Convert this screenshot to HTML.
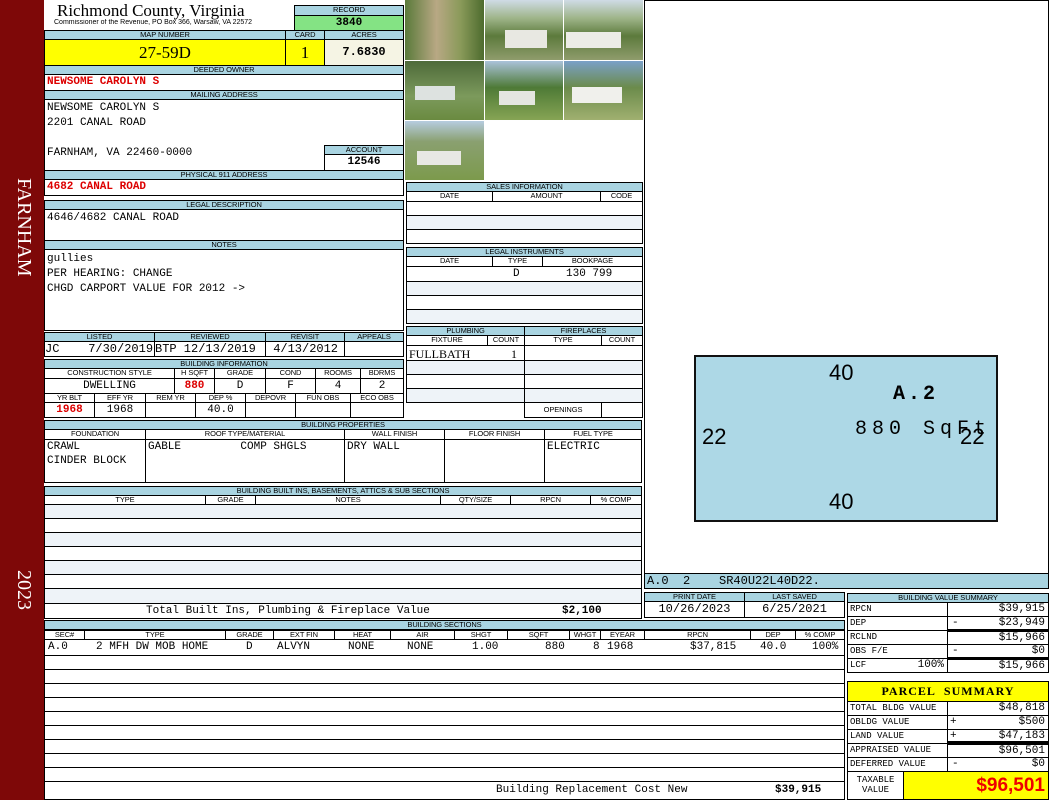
<!DOCTYPE html>
<html><head><meta charset="utf-8"><style>
body{margin:0;width:1050px;height:800px;position:relative;background:#fff;overflow:hidden;font-family:"Liberation Sans",sans-serif}
.a{position:absolute;box-sizing:border-box;overflow:hidden;white-space:nowrap}
.h{background:#a9d4e1;border:1px solid #000;font-size:7.5px;text-align:center;line-height:8px;letter-spacing:-0.1px}
.v{border:1px solid #000;font-family:"Liberation Mono",monospace;font-size:11px;background:#fff}
.s{background:#eef3f8}
.r{color:#d00;font-weight:bold}
.c{text-align:center}
.rt{text-align:right;padding-right:3px}
.p{padding-left:2px}
.ph{background:linear-gradient(#cfdbe6 0%,#9fb58a 30%,#5c7a3c 60%,#8f9c6c 100%)}
</style></head><body>
<div class="a" style="left:0;top:0;width:44px;height:800px;background:#7e0808"></div>
<div class="a" style="left:12px;top:178px;width:24px;height:130px;writing-mode:vertical-rl;color:#fff;font:20px 'Liberation Serif',serif;line-height:24px">FARNHAM</div>
<div class="a" style="left:12px;top:570px;width:24px;height:60px;writing-mode:vertical-rl;color:#fff;font:20px 'Liberation Serif',serif;line-height:24px">2023</div>

<div class="a" style="left:57px;top:1px;font:17px 'Liberation Serif',serif">Richmond County, Virginia</div>
<div class="a" style="left:54px;top:19px;font-size:7px">Commissioner of the Revenue, PO Box 366, Warsaw, VA 22572</div>
<div class="a h" style="left:294px;top:5px;width:110px;height:11px">RECORD</div>
<div class="a v c" style="left:294px;top:15px;width:110px;height:16px;background:#84e384;font-weight:bold;line-height:14px">3840</div>

<div class="a h" style="left:44px;top:30px;width:242px;height:10px">MAP NUMBER</div>
<div class="a h" style="left:285px;top:30px;width:40px;height:10px">CARD</div>
<div class="a h" style="left:324px;top:30px;width:80px;height:10px">ACRES</div>
<div class="a v c" style="left:44px;top:39px;width:242px;height:27px;background:#ffff00;font:17px 'Liberation Serif',serif;line-height:25px">27-59D</div>
<div class="a v c" style="left:285px;top:39px;width:40px;height:27px;background:#ffff00;font:17px 'Liberation Serif',serif;line-height:25px">1</div>
<div class="a v c" style="left:324px;top:39px;width:80px;height:27px;background:#f5f4e4;font-weight:bold;font-size:12px;line-height:25px">7.6830</div>

<div class="a h" style="left:44px;top:65px;width:360px;height:10px">DEEDED OWNER</div>
<div class="a v p r" style="left:44px;top:74px;width:360px;height:17px;line-height:15px">NEWSOME CAROLYN S</div>
<div class="a h" style="left:44px;top:90px;width:360px;height:10px">MAILING ADDRESS</div>
<div class="a v p" style="left:44px;top:99px;width:360px;height:72px;line-height:15px;padding-top:1px">NEWSOME CAROLYN S<br>2201 CANAL ROAD<br><br>FARNHAM, VA 22460-0000</div>
<div class="a h" style="left:324px;top:145px;width:80px;height:10px">ACCOUNT</div>
<div class="a v c" style="left:324px;top:154px;width:80px;height:17px;font-weight:bold;line-height:15px">12546</div>
<div class="a h" style="left:44px;top:170px;width:360px;height:10px">PHYSICAL 911 ADDRESS</div>
<div class="a v p r" style="left:44px;top:179px;width:360px;height:17px;line-height:15px">4682 CANAL ROAD</div>
<div class="a h" style="left:44px;top:200px;width:360px;height:10px">LEGAL DESCRIPTION</div>
<div class="a v p" style="left:44px;top:209px;width:360px;height:32px;line-height:17px">4646/4682 CANAL ROAD</div>
<div class="a h" style="left:44px;top:240px;width:360px;height:10px">NOTES</div>
<div class="a v p" style="left:44px;top:249px;width:360px;height:82px;line-height:15px;padding-top:2px">gullies<br>PER HEARING: CHANGE<br>CHGD CARPORT VALUE FOR 2012 -&gt;</div>

<div class="a h" style="left:44px;top:332px;width:111px;height:10px">LISTED</div>
<div class="a h" style="left:154px;top:332px;width:112px;height:10px">REVIEWED</div>
<div class="a h" style="left:265px;top:332px;width:80px;height:10px">REVISIT</div>
<div class="a h" style="left:344px;top:332px;width:60px;height:10px">APPEALS</div>
<div class="a v" style="left:44px;top:341px;width:111px;height:16px;line-height:14px;font-size:12px">JC&nbsp;&nbsp;&nbsp;&nbsp;7/30/2019</div>
<div class="a v" style="left:154px;top:341px;width:112px;height:16px;line-height:14px;font-size:12px">BTP 12/13/2019</div>
<div class="a v" style="left:265px;top:341px;width:80px;height:16px;line-height:14px;font-size:12px">&nbsp;4/13/2012</div>
<div class="a v" style="left:344px;top:341px;width:60px;height:16px"></div>

<div class="a h" style="left:44px;top:359px;width:360px;height:10px">BUILDING INFORMATION</div>
<div class="a h" style="left:44px;top:368px;width:131px;height:11px;background:#fff">CONSTRUCTION STYLE</div>
<div class="a h" style="left:174px;top:368px;width:41px;height:11px;background:#fff">H SQFT</div>
<div class="a h" style="left:214px;top:368px;width:52px;height:11px;background:#fff">GRADE</div>
<div class="a h" style="left:265px;top:368px;width:51px;height:11px;background:#fff">COND</div>
<div class="a h" style="left:315px;top:368px;width:46px;height:11px;background:#fff">ROOMS</div>
<div class="a h" style="left:360px;top:368px;width:44px;height:11px;background:#fff">BDRMS</div>
<div class="a v c" style="left:44px;top:378px;width:131px;height:16px;line-height:14px">DWELLING</div>
<div class="a v c r" style="left:174px;top:378px;width:41px;height:16px;line-height:14px">880</div>
<div class="a v c" style="left:214px;top:378px;width:52px;height:16px;line-height:14px">D</div>
<div class="a v c" style="left:265px;top:378px;width:51px;height:16px;line-height:14px">F</div>
<div class="a v c" style="left:315px;top:378px;width:46px;height:16px;line-height:14px">4</div>
<div class="a v c" style="left:360px;top:378px;width:44px;height:16px;line-height:14px">2</div>
<div class="a h" style="left:44px;top:393px;width:51px;height:10px;background:#fff">YR BLT</div>
<div class="a h" style="left:94px;top:393px;width:52px;height:10px;background:#fff">EFF YR</div>
<div class="a h" style="left:145px;top:393px;width:51px;height:10px;background:#fff">REM YR</div>
<div class="a h" style="left:195px;top:393px;width:51px;height:10px;background:#fff">DEP %</div>
<div class="a h" style="left:245px;top:393px;width:51px;height:10px;background:#fff">DEPOVR</div>
<div class="a h" style="left:295px;top:393px;width:56px;height:10px;background:#fff">FUN OBS</div>
<div class="a h" style="left:350px;top:393px;width:54px;height:10px;background:#fff">ECO OBS</div>
<div class="a v c r" style="left:44px;top:402px;width:51px;height:16px;line-height:14px">1968</div>
<div class="a v c" style="left:94px;top:402px;width:52px;height:16px;line-height:14px">1968</div>
<div class="a v" style="left:145px;top:402px;width:51px;height:16px"></div>
<div class="a v c" style="left:195px;top:402px;width:51px;height:16px;line-height:14px">40.0</div>
<div class="a v" style="left:245px;top:402px;width:51px;height:16px"></div>
<div class="a v" style="left:295px;top:402px;width:56px;height:16px"></div>
<div class="a v" style="left:350px;top:402px;width:54px;height:16px"></div>

<div class="a h" style="left:44px;top:420px;width:598px;height:10px">BUILDING PROPERTIES</div>
<div class="a h" style="left:44px;top:429px;width:102px;height:11px;background:#fff">FOUNDATION</div>
<div class="a h" style="left:145px;top:429px;width:200px;height:11px;background:#fff">ROOF TYPE/MATERIAL</div>
<div class="a h" style="left:344px;top:429px;width:101px;height:11px;background:#fff">WALL FINISH</div>
<div class="a h" style="left:444px;top:429px;width:101px;height:11px;background:#fff">FLOOR FINISH</div>
<div class="a h" style="left:544px;top:429px;width:98px;height:11px;background:#fff">FUEL TYPE</div>
<div class="a v p" style="left:44px;top:439px;width:102px;height:44px;line-height:14px">CRAWL<br>CINDER BLOCK</div>
<div class="a v p" style="left:145px;top:439px;width:200px;height:44px;line-height:14px">GABLE&nbsp;&nbsp;&nbsp;&nbsp;&nbsp;&nbsp;&nbsp;&nbsp;&nbsp;COMP SHGLS</div>
<div class="a v p" style="left:344px;top:439px;width:101px;height:44px;line-height:14px">DRY WALL</div>
<div class="a v" style="left:444px;top:439px;width:101px;height:44px"></div>
<div class="a v p" style="left:544px;top:439px;width:98px;height:44px;line-height:14px">ELECTRIC</div>

<div class="a h" style="left:44px;top:486px;width:598px;height:10px">BUILDING BUILT INS, BASEMENTS, ATTICS &amp; SUB SECTIONS</div>
<div class="a h" style="left:44px;top:495px;width:162px;height:10px;background:#fff">TYPE</div>
<div class="a h" style="left:205px;top:495px;width:51px;height:10px;background:#fff">GRADE</div>
<div class="a h" style="left:255px;top:495px;width:186px;height:10px;background:#fff">NOTES</div>
<div class="a h" style="left:440px;top:495px;width:71px;height:10px;background:#fff">QTY/SIZE</div>
<div class="a h" style="left:510px;top:495px;width:81px;height:10px;background:#fff">RPCN</div>
<div class="a h" style="left:590px;top:495px;width:52px;height:10px;background:#fff">% COMP</div>
<div class="a v s" style="left:44px;top:504px;width:598px;height:15px"></div>
<div class="a v" style="left:44px;top:518px;width:598px;height:15px"></div>
<div class="a v s" style="left:44px;top:532px;width:598px;height:15px"></div>
<div class="a v" style="left:44px;top:546px;width:598px;height:15px"></div>
<div class="a v s" style="left:44px;top:560px;width:598px;height:15px"></div>
<div class="a v" style="left:44px;top:574px;width:598px;height:15px"></div>
<div class="a v s" style="left:44px;top:588px;width:598px;height:16px"></div>
<div class="a v" style="left:44px;top:603px;width:598px;height:16px;line-height:15px"><span style="position:absolute;left:101px">Total Built Ins, Plumbing &amp; Fireplace Value</span><span style="position:absolute;left:517px;font-weight:bold">$2,100</span></div>

<div class="a h" style="left:44px;top:620px;width:801px;height:10px">BUILDING SECTIONS</div>
<div class="a h" style="left:44px;top:630px;width:41px;height:10px;background:#fff">SEC#</div>
<div class="a h" style="left:84px;top:630px;width:142px;height:10px;background:#fff">TYPE</div>
<div class="a h" style="left:225px;top:630px;width:49px;height:10px;background:#fff">GRADE</div>
<div class="a h" style="left:273px;top:630px;width:62px;height:10px;background:#fff">EXT FIN</div>
<div class="a h" style="left:334px;top:630px;width:57px;height:10px;background:#fff">HEAT</div>
<div class="a h" style="left:390px;top:630px;width:65px;height:10px;background:#fff">AIR</div>
<div class="a h" style="left:454px;top:630px;width:54px;height:10px;background:#fff">SHGT</div>
<div class="a h" style="left:507px;top:630px;width:63px;height:10px;background:#fff">SQFT</div>
<div class="a h" style="left:569px;top:630px;width:32px;height:10px;background:#fff">WHGT</div>
<div class="a h" style="left:600px;top:630px;width:45px;height:10px;background:#fff">EYEAR</div>
<div class="a h" style="left:644px;top:630px;width:107px;height:10px;background:#fff">RPCN</div>
<div class="a h" style="left:750px;top:630px;width:46px;height:10px;background:#fff">DEP</div>
<div class="a h" style="left:795px;top:630px;width:50px;height:10px;background:#fff">% COMP</div>
<div class="a v" style="left:44px;top:639px;width:801px;height:17px;line-height:15px"><span style="position:absolute;left:3px">A.0</span><span style="position:absolute;left:51px">2 MFH DW MOB HOME</span><span style="position:absolute;left:201px">D</span><span style="position:absolute;left:232px">ALVYN</span><span style="position:absolute;left:303px">NONE</span><span style="position:absolute;left:362px">NONE</span><span style="position:absolute;left:427px">1.00</span><span style="position:absolute;left:500px">880</span><span style="position:absolute;left:548px">8</span><span style="position:absolute;left:562px">1968</span><span style="position:absolute;left:645px">$37,815</span><span style="position:absolute;left:715px">40.0</span><span style="position:absolute;left:767px">100%</span></div>
<div class="a v" style="left:44px;top:655px;width:801px;height:15px"></div>
<div class="a v" style="left:44px;top:669px;width:801px;height:15px"></div>
<div class="a v" style="left:44px;top:683px;width:801px;height:15px"></div>
<div class="a v" style="left:44px;top:697px;width:801px;height:15px"></div>
<div class="a v" style="left:44px;top:711px;width:801px;height:15px"></div>
<div class="a v" style="left:44px;top:725px;width:801px;height:15px"></div>
<div class="a v" style="left:44px;top:739px;width:801px;height:15px"></div>
<div class="a v" style="left:44px;top:753px;width:801px;height:15px"></div>
<div class="a v" style="left:44px;top:767px;width:801px;height:15px"></div>
<div class="a v" style="left:44px;top:781px;width:801px;height:19px;line-height:17px"><span style="position:absolute;left:451px">Building Replacement Cost New</span><span style="position:absolute;left:730px;font-weight:bold">$39,915</span></div>

<div class="a ph" style="left:405px;top:0;width:79px;height:60px;background:linear-gradient(90deg,#5a7a3a,#b8a884 40%,#8a9a5a 70%,#4d6b2e)"></div>
<div class="a ph" style="left:485px;top:0;width:78px;height:60px"><div class="a" style="left:20px;top:30px;width:42px;height:18px;background:#e8e8e2"></div></div>
<div class="a ph" style="left:564px;top:0;width:79px;height:60px"><div class="a" style="left:2px;top:32px;width:55px;height:16px;background:#ecece6"></div></div>
<div class="a ph" style="left:405px;top:61px;width:79px;height:59px;background:linear-gradient(#4e6a3a,#7c9a5c 60%,#6a8a40)"><div class="a" style="left:10px;top:25px;width:40px;height:14px;background:#dde2e0"></div></div>
<div class="a ph" style="left:485px;top:61px;width:78px;height:59px;background:linear-gradient(#aac2da,#4e7a36 45%,#86a454)"><div class="a" style="left:14px;top:30px;width:36px;height:14px;background:#e4e6e0"></div></div>
<div class="a ph" style="left:564px;top:61px;width:79px;height:59px;background:linear-gradient(#7aa0c8,#6b8b4b 45%,#a0b070)"><div class="a" style="left:8px;top:26px;width:50px;height:16px;background:#f0f0ec"></div></div>
<div class="a ph" style="left:405px;top:121px;width:79px;height:59px;background:linear-gradient(#b6cce0,#8aa070 35%,#7c9a4c)"><div class="a" style="left:12px;top:30px;width:44px;height:14px;background:#e8e8e4"></div></div>

<div class="a h" style="left:406px;top:182px;width:237px;height:10px">SALES INFORMATION</div>
<div class="a h" style="left:406px;top:191px;width:87px;height:11px;background:#fff">DATE</div>
<div class="a h" style="left:492px;top:191px;width:109px;height:11px;background:#fff">AMOUNT</div>
<div class="a h" style="left:600px;top:191px;width:43px;height:11px;background:#fff">CODE</div>
<div class="a v" style="left:406px;top:201px;width:237px;height:15px"></div>
<div class="a v s" style="left:406px;top:215px;width:237px;height:15px"></div>
<div class="a v" style="left:406px;top:229px;width:237px;height:15px"></div>
<div class="a h" style="left:406px;top:247px;width:237px;height:10px">LEGAL INSTRUMENTS</div>
<div class="a h" style="left:406px;top:256px;width:87px;height:11px;background:#fff">DATE</div>
<div class="a h" style="left:492px;top:256px;width:51px;height:11px;background:#fff">TYPE</div>
<div class="a h" style="left:542px;top:256px;width:101px;height:11px;background:#fff">BOOKPAGE</div>
<div class="a v" style="left:406px;top:266px;width:237px;height:16px;line-height:14px"><span style="position:absolute;left:106px">D</span><span style="position:absolute;left:159px">130 799</span></div>
<div class="a v s" style="left:406px;top:281px;width:237px;height:15px"></div>
<div class="a v" style="left:406px;top:295px;width:237px;height:15px"></div>
<div class="a v s" style="left:406px;top:309px;width:237px;height:15px"></div>

<div class="a h" style="left:406px;top:326px;width:119px;height:10px">PLUMBING</div>
<div class="a h" style="left:524px;top:326px;width:119px;height:10px">FIREPLACES</div>
<div class="a h" style="left:406px;top:335px;width:82px;height:11px;background:#fff">FIXTURE</div>
<div class="a h" style="left:487px;top:335px;width:38px;height:11px;background:#fff">COUNT</div>
<div class="a h" style="left:524px;top:335px;width:78px;height:11px;background:#fff">TYPE</div>
<div class="a h" style="left:601px;top:335px;width:42px;height:11px;background:#fff">COUNT</div>
<div class="a v" style="left:406px;top:345px;width:119px;height:16px;line-height:16px;font-family:'Liberation Serif',serif;font-size:12px"><span style="position:absolute;left:2px">FULLBATH</span><span style="position:absolute;left:104px">1</span></div>
<div class="a v s" style="left:406px;top:360px;width:119px;height:15px"></div>
<div class="a v" style="left:406px;top:374px;width:119px;height:15px"></div>
<div class="a v s" style="left:406px;top:388px;width:119px;height:15px"></div>
<div class="a v" style="left:524px;top:345px;width:119px;height:16px"></div>
<div class="a v s" style="left:524px;top:360px;width:119px;height:15px"></div>
<div class="a v" style="left:524px;top:374px;width:119px;height:15px"></div>
<div class="a v s" style="left:524px;top:388px;width:119px;height:15px"></div>
<div class="a h" style="left:524px;top:402px;width:78px;height:16px;background:#fff;line-height:14px">OPENINGS</div>
<div class="a v" style="left:601px;top:402px;width:42px;height:16px"></div>

<div class="a" style="left:644px;top:0;width:405px;height:574px;border:1px solid #000"></div>
<div class="a" style="left:694px;top:355px;width:304px;height:167px;background:#add8e6;border:2px solid #111"></div>
<div class="a" style="left:829px;top:360px;font:22px 'Liberation Sans',sans-serif">40</div>
<div class="a" style="left:829px;top:489px;font:22px 'Liberation Sans',sans-serif">40</div>
<div class="a" style="left:702px;top:424px;font:22px 'Liberation Sans',sans-serif">22</div>
<div class="a" style="left:893px;top:383px;font:bold 20px 'Liberation Mono',monospace;letter-spacing:3px">A.2</div>
<div class="a" style="left:960px;top:424px;font:22px 'Liberation Sans',sans-serif">22</div>
<div class="a" style="left:855px;top:418px;font:20px 'Liberation Mono',monospace;letter-spacing:5px">880 SqFt</div>
<div class="a v" style="left:644px;top:573px;width:405px;height:16px;background:#a9d4e1;line-height:14px;font-size:12px;padding-left:2px">A.0&nbsp;&nbsp;2&nbsp;&nbsp;&nbsp;&nbsp;SR40U22L40D22.</div>

<div class="a h" style="left:644px;top:592px;width:101px;height:10px">PRINT DATE</div>
<div class="a h" style="left:744px;top:592px;width:101px;height:10px">LAST SAVED</div>
<div class="a v c" style="left:644px;top:601px;width:101px;height:17px;line-height:15px;font-size:12px">10/26/2023</div>
<div class="a v c" style="left:744px;top:601px;width:101px;height:17px;line-height:15px;font-size:12px">6/25/2021</div>

<div class="a h" style="left:847px;top:593px;width:202px;height:10px">BUILDING VALUE SUMMARY</div>
<div class="a v p" style="left:847px;top:602px;width:101px;height:15px;font-size:9px;line-height:13px">RPCN</div>
<div class="a v rt" style="left:947px;top:602px;width:102px;height:15px;line-height:13px">$39,915</div>
<div class="a v p" style="left:847px;top:616px;width:101px;height:15px;font-size:9px;line-height:13px">DEP</div>
<div class="a v rt" style="left:947px;top:616px;width:102px;height:16px;line-height:13px;border-bottom:3px solid #000"><span style="position:absolute;left:4px">-</span>$23,949</div>
<div class="a v p" style="left:847px;top:630px;width:101px;height:15px;font-size:9px;line-height:13px">RCLND</div>
<div class="a v rt" style="left:947px;top:631px;width:102px;height:15px;line-height:13px">$15,966</div>
<div class="a v p" style="left:847px;top:644px;width:101px;height:15px;font-size:9px;line-height:13px">OBS F/E</div>
<div class="a v rt" style="left:947px;top:644px;width:102px;height:16px;line-height:13px;border-bottom:3px solid #000"><span style="position:absolute;left:4px">-</span>$0</div>
<div class="a v p" style="left:847px;top:658px;width:101px;height:15px;font-size:9px;line-height:13px">LCF<span style="position:absolute;right:3px;font-size:11px">100%</span></div>
<div class="a v rt" style="left:947px;top:659px;width:102px;height:14px;line-height:12px">$15,966</div>

<div class="a v c" style="left:847px;top:681px;width:202px;height:21px;background:#ffff00;font-family:'Liberation Serif',serif;font-weight:bold;font-size:12px;line-height:19px;letter-spacing:1px">PARCEL&nbsp;&nbsp;SUMMARY</div>
<div class="a v p" style="left:847px;top:701px;width:101px;height:15px;font-size:9px;line-height:13px">TOTAL BLDG VALUE</div>
<div class="a v rt" style="left:947px;top:701px;width:102px;height:15px;line-height:13px">$48,818</div>
<div class="a v p" style="left:847px;top:715px;width:101px;height:15px;font-size:9px;line-height:13px">OBLDG VALUE</div>
<div class="a v rt" style="left:947px;top:715px;width:102px;height:15px;line-height:13px"><span style="position:absolute;left:2px">+</span>$500</div>
<div class="a v p" style="left:847px;top:729px;width:101px;height:15px;font-size:9px;line-height:13px">LAND VALUE</div>
<div class="a v rt" style="left:947px;top:729px;width:102px;height:15px;line-height:13px;border-bottom:3px solid #000"><span style="position:absolute;left:2px">+</span>$47,183</div>
<div class="a v p" style="left:847px;top:743px;width:101px;height:15px;font-size:9px;line-height:13px">APPRAISED VALUE</div>
<div class="a v rt" style="left:947px;top:744px;width:102px;height:14px;line-height:12px">$96,501</div>
<div class="a v p" style="left:847px;top:757px;width:101px;height:15px;font-size:9px;line-height:13px">DEFERRED VALUE</div>
<div class="a v rt" style="left:947px;top:757px;width:102px;height:15px;line-height:13px"><span style="position:absolute;left:4px">-</span>$0</div>
<div class="a v c" style="left:847px;top:771px;width:57px;height:29px;font-size:9px;line-height:10px;padding-top:3px">TAXABLE<br>VALUE</div>
<div class="a v" style="left:903px;top:771px;width:146px;height:29px;background:#ffff00;color:#e00;font:bold 19px 'Liberation Sans',sans-serif;text-align:right;padding-right:3px;line-height:27px">$96,501</div>
</body></html>
